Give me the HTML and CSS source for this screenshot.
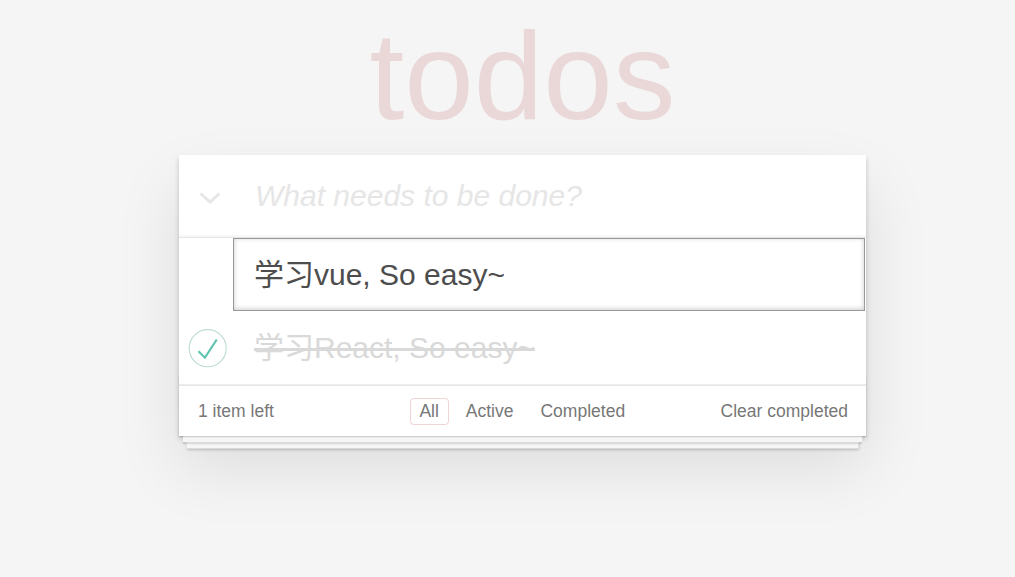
FILE: index.html
```html
<!DOCTYPE html>
<html lang="zh">
<head>
<meta charset="utf-8">
<title>todos</title>
<link rel="stylesheet" href="styles.css">
</head>
<body>
<section class="todoapp">
  <h1 class="title">todos</h1>
  <div class="card">
    <header class="header">
      <label class="toggle-all" aria-label="Mark all as complete">
        <svg width="22" height="12" viewBox="0 0 22 12"><path d="M1.5 1.5 L11 10 L20.5 1.5" fill="none" stroke="#e6e6e6" stroke-width="3"/></svg>
      </label>
      <input class="new-todo" placeholder="What needs to be done?">
    </header>
    <ul class="todo-list">
      <li class="editing">
        <input class="edit" value="学习vue, So easy~">
      </li>
      <li class="completed">
        <svg class="toggle" width="50" height="50" viewBox="-10 -18 100 135"><circle cx="50" cy="50" r="50" fill="none" stroke="#bddad5" stroke-width="3"/><path fill="#5dc2af" d="M72 25L42 71 27 56l-4 4 20 20 34-52z"/></svg>
        <label class="todo-label">学习React, So easy~</label>
      </li>
    </ul>
    <footer class="footer">
      <span class="todo-count"><strong class="count">1</strong> item left</span>
      <ul class="filters">
        <li><a class="filter selected" href="#/">All</a></li>
        <li><a class="filter" href="#/active">Active</a></li>
        <li><a class="filter" href="#/completed">Completed</a></li>
      </ul>
      <button class="clear-completed">Clear completed</button>
    </footer>
  </div>
</section>
</body>
</html>
```

FILE: styles.css
```css
html, body {
  margin: 0;
  padding: 0;
}

html {
  background: #f5f5f5;
}

body {
  font-family: "Liberation Sans", "Noto Sans CJK SC", Arial, sans-serif;
  font-size: 17.5px;
  line-height: 1.4em;
  background: #f5f5f5;
  color: #4d4d4d;
  padding-left: 30px;
  min-height: 100vh;
  box-sizing: border-box;
  -webkit-font-smoothing: antialiased;
}

.todoapp {
  width: 687px;
  margin: 0 auto;
  padding-bottom: 120px;
}

.title {
  margin: 0;
  font-size: 125px;
  line-height: 152px;
  height: 155px;
  font-weight: 200;
  text-align: center;
  color: rgba(175, 47, 47, 0.15);
}

.card {
  background: #fff;
  position: relative;
  box-shadow: 0 2.5px 5px 0 rgba(0, 0, 0, 0.2),
              0 31px 62px 0 rgba(0, 0, 0, 0.1);
}

.header {
  display: flex;
  align-items: center;
  height: 82px;
  box-shadow: inset 0 -2px 1px rgba(0, 0, 0, 0.03);
}

.toggle-all {
  width: 56px;
  padding-left: 20px;
  display: flex;
  align-items: center;
  margin-top: 3px;
}

.new-todo {
  flex: 1;
  min-width: 0;
  border: none;
  background: transparent;
  font-family: inherit;
  font-size: 30px;
  line-height: 42px;
  padding: 0;
  color: #4d4d4d;
  outline: none;
}

.new-todo::placeholder {
  font-style: italic;
  color: #e6e6e6;
}

.todo-list {
  list-style: none;
  margin: 0;
  padding: 0;
  border-top: 1px solid #e6e6e6;
}

.todo-list li {
  font-size: 30px;
  border-bottom: 1px solid #ededed;
}

.todo-list li.editing {
  border-bottom: none;
}

.edit {
  display: block;
  box-sizing: border-box;
  width: 632px;
  height: 73px;
  margin: 0 0 0 54px;
  padding: 11px 20px 17px;
  font-family: inherit;
  font-size: 30px;
  line-height: 42px;
  color: #4d4d4d;
  border: 1px solid #999;
  box-shadow: inset 0 -1px 5px 0 rgba(0, 0, 0, 0.2);
  outline: none;
  background: #fff;
}

.todo-list li.completed {
  display: flex;
  align-items: center;
  height: 73px;
}

.toggle {
  flex: none;
}

.todo-label {
  padding-left: 25px;
  line-height: 36px;
  color: #d9d9d9;
  text-decoration: line-through;
}

.footer {
  position: relative;
  display: flex;
  align-items: center;
  justify-content: space-between;
  height: 50px;
  padding: 0 18px 0 19px;
  color: #777;
  border-top: 1px solid #e6e6e6;
}

.footer::before {
  content: "";
  position: absolute;
  right: 0;
  bottom: 0;
  left: 0;
  height: 62px;
  overflow: hidden;
  box-shadow: 0 1.25px 1.25px rgba(0, 0, 0, 0.2),
              0 10px 0 -3.75px #f6f6f6,
              0 11.25px 1.25px -3.75px rgba(0, 0, 0, 0.2),
              0 20px 0 -7.5px #f6f6f6,
              0 21.25px 2.5px -7.5px rgba(0, 0, 0, 0.2);
}

.count {
  font-weight: 400;
}

.filters {
  list-style: none;
  margin: 0 0 0 132px;
  padding: 0;
  display: flex;
}

.filter {
  display: inline-block;
  color: inherit;
  text-decoration: none;
  margin: 0 3.75px;
  padding: 2px 8.75px;
  line-height: 21px;
  border: 1px solid transparent;
  border-radius: 3.75px;
}

.filter.selected {
  border-color: rgba(175, 47, 47, 0.2);
}

.clear-completed {
  margin-left: auto;
  border: none;
  background: none;
  padding: 0;
  font: inherit;
  color: inherit;
  cursor: pointer;
}
```
